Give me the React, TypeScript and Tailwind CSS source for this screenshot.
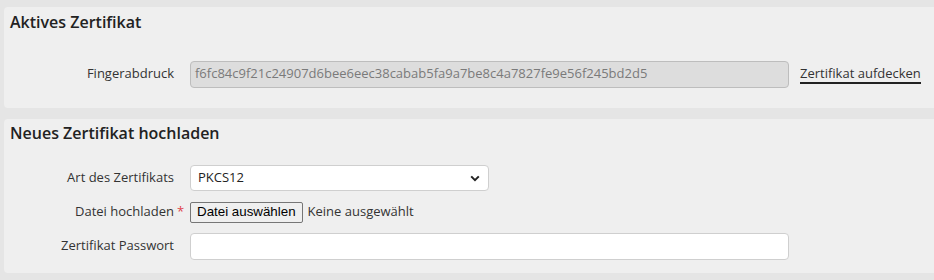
import React from "react";

const font = { fontFamily: '"Open Sans", "Liberation Sans", sans-serif' };

const Row: React.FC<{ label: string; required?: boolean; children: React.ReactNode }> = ({
  label,
  required,
  children,
}) => (
  <div className="flex items-center h-[26px]">
    <div className="relative w-[164px] shrink-0 text-right text-[13px] text-[#333]">
      {label}
      {required && <span className="absolute left-full ml-[3px] text-[#e0434b]">*</span>}
    </div>
    <div className="ml-4 flex items-center flex-1">{children}</div>
  </div>
);

const App: React.FC = () => {
  return (
    <div className="w-[934px] h-[280px] bg-[#e5e5e5] pl-1 pt-[7px] overflow-hidden" style={font}>
      <div className="bg-[#efefef] rounded-l-[4px] h-[101px] pt-1 pl-[6px]">
        <h2 className="text-[16px] leading-[22px] font-semibold text-[#222]">Aktives Zertifikat</h2>
        <div className="mt-[28px]">
          <Row label="Fingerabdruck">
            <div className="w-[599px] h-[27px] rounded-[4px] border border-[#bdbdbd] bg-[#dddddd] px-[4px] flex items-center text-[13px] text-[#7a7a7a]">
              f6fc84c9f21c24907d6bee6eec38cabab5fa9a7be8c4a7827fe9e56f245bd2d5
            </div>
            <a className="ml-[11px] text-[13px] text-[#333] leading-[18px] border-b-2 border-[#222] cursor-pointer">
              Zertifikat aufdecken
            </a>
          </Row>
        </div>
      </div>

      <div className="mt-[11px] bg-[#efefef] rounded-l-[4px] h-[154px] pt-[3px] pl-[6px]">
        <h2 className="text-[16px] leading-[22px] font-semibold text-[#222]">Neues Zertifikat hochladen</h2>
        <div className="mt-[21px] flex flex-col gap-2">
          <Row label="Art des Zertifikats">
            <div className="w-[299px] h-[26px] rounded-[4px] border border-[#cfcfcf] bg-white pl-[7px] pr-[8px] flex items-center justify-between text-[13px] text-[#222]">
              <span>PKCS12</span>
              <svg width="10" height="7" viewBox="0 0 10 7" fill="none">
                <path d="M1.2 1.4 L5 5.2 L8.8 1.4" stroke="#222" strokeWidth="2" />
              </svg>
            </div>
          </Row>
          <Row label="Datei hochladen" required>
            <button
              className="h-[21px] px-[6px] rounded-[2px] border border-[#767676] bg-[#efefef] text-[13.33px] text-black leading-none"
              style={{ fontFamily: '"Liberation Sans", Arial, sans-serif' }}
            >
              Datei auswählen
            </button>
            <span className="ml-[5px] text-[13px] text-[#333]">Keine ausgewählt</span>
          </Row>
          <Row label="Zertifikat Passwort">
            <input
              type="password"
              className="w-[599px] h-[27px] rounded-[4px] border border-[#cfcfcf] bg-white outline-none"
            />
          </Row>
        </div>
      </div>
    </div>
  );
};

export default App;
